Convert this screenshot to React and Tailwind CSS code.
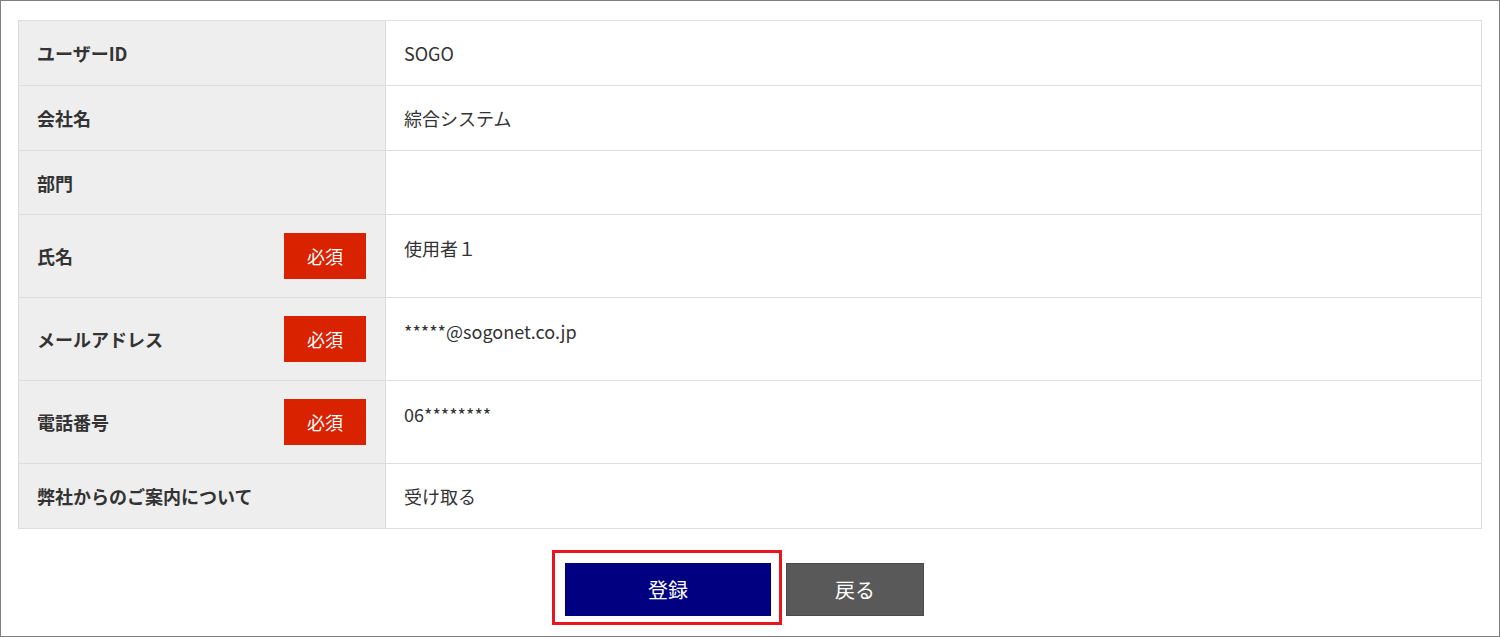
import React from "react";

const rows = [
  { label: "ユーザーID", value: "SOGO", h: "h-[65px]" },
  { label: "会社名", value: "綜合システム", h: "h-[65px]" },
  { label: "部門", value: "", h: "h-[64px]" },
  { label: "氏名", value: "使用者１", required: true, h: "h-[83px]" },
  { label: "メールアドレス", value: "*****@sogonet.co.jp", required: true, h: "h-[83px]" },
  { label: "電話番号", value: "06********", required: true, h: "h-[83px]" },
  { label: "弊社からのご案内について", value: "受け取る", h: "h-[64px]" },
];

const Row = ({ row, last }) => (
  <div className={`flex ${row.h} ${last ? "" : "border-b border-[#dddddd]"}`}>
    <div className="w-[367px] shrink-0 bg-[#eeeeee] border-r border-[#dddddd] flex items-center justify-between pl-[18px] pr-[19px]">
      <span className="font-bold text-[#333333]">{row.label}</span>
      {row.required && (
        <span className="w-[82px] h-[46px] bg-[#d82200] text-white text-[18px] flex items-center justify-center">
          必須
        </span>
      )}
    </div>
    <div
      className={`flex-1 pl-[18px] text-[#333333] ${
        row.required ? "pt-[21px]" : "flex items-center"
      }`}
    >
      {row.value}
    </div>
  </div>
);

export default function App() {
  return (
    <div
      className="w-[1500px] h-[637px] border border-[#808080] bg-white px-[17px] pt-[19px] text-[18px] leading-[24px]"
      style={{ fontFamily: '"Noto Sans CJK JP", "Noto Sans", sans-serif' }}
    >
      {/* detail table */}
      <div className="border border-[#dddddd]">
        {rows.map((row, i) => (
          <Row key={row.label} row={row} last={i === rows.length - 1} />
        ))}
      </div>

      {/* buttons */}
      <div className="flex justify-center items-start mt-[21px] pr-[24px]">
        <div className="border-[3px] border-[#e8141e] pl-[10px] pr-[8px] pt-[10px] pb-[6px]">
          <button className="w-[206px] h-[53px] bg-[#000080] text-white text-[20px]">
            登録
          </button>
        </div>
        <button className="ml-[4px] mt-[13px] w-[138px] h-[53px] bg-[#595959] border border-[#4a4a4a] text-white text-[20px]">
          戻る
        </button>
      </div>
    </div>
  );
}
